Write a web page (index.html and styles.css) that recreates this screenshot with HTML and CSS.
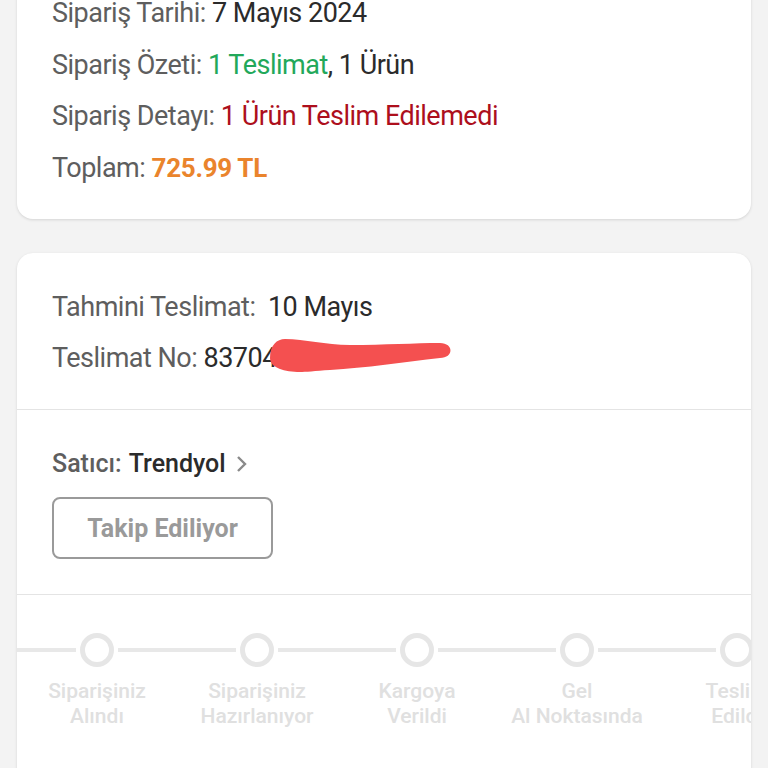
FILE: index.html
```html
<!DOCTYPE html>
<html lang="tr">
<head>
<meta charset="utf-8">
<link rel="stylesheet" href="styles.css">
</head>
<body>
<div class="page">
  <div class="card card-summary">
    <div class="row"><span class="lbl">Sipariş Tarihi:</span> <span class="val">7 Mayıs 2024</span></div>
    <div class="row"><span class="lbl">Sipariş Özeti:</span> <span class="green">1 Teslimat</span><span class="val">, 1 Ürün</span></div>
    <div class="row"><span class="lbl">Sipariş Detayı:</span> <span class="red">1 Ürün Teslim Edilemedi</span></div>
    <div class="row"><span class="lbl">Toplam:</span> <span class="orange">725.99 TL</span></div>
  </div>

  <div class="card card-delivery">
    <div class="section sec-info">
      <div class="row"><span class="lbl">Tahmini Teslimat:</span>&nbsp; <span class="val">10 Mayıs</span></div>
      <div class="row"><span class="lbl">Teslimat No:</span> <span class="val">83704</span></div>
      <svg class="scribble" width="210" height="45" viewBox="0 0 210 45">
        <path d="M15 23 C15 10 22 4 30 4 C50 4 70 10 95 10 C130 10 160 8 185 8 C199 8 199 23 185 23 C150 27 110 33 75 35 C60 36 50 37 45 37 C30 37 15 33 15 23 Z" fill="#f45050"/>
      </svg>
    </div>
    <div class="section sec-seller">
      <div class="seller"><span class="lbl">Satıcı:</span> <span class="val">Trendyol</span>
        <svg class="chev" width="12" height="18" viewBox="0 0 12 18"><polyline points="2,2 9,9 2,16" fill="none" stroke="#8a8a8a" stroke-width="2.4"/></svg>
      </div>
      <button class="follow">Takip Ediliyor</button>
    </div>
    <div class="section sec-steps">
      <div class="steps">
        <div class="step"><div class="track"><span class="ln"></span><span class="dot"></span><span class="ln"></span></div><div class="slbl">Siparişiniz<br>Alındı</div></div>
        <div class="step"><div class="track"><span class="ln"></span><span class="dot"></span><span class="ln"></span></div><div class="slbl">Siparişiniz<br>Hazırlanıyor</div></div>
        <div class="step"><div class="track"><span class="ln"></span><span class="dot"></span><span class="ln"></span></div><div class="slbl">Kargoya<br>Verildi</div></div>
        <div class="step"><div class="track"><span class="ln"></span><span class="dot"></span><span class="ln"></span></div><div class="slbl">Gel<br>Al Noktasında</div></div>
        <div class="step"><div class="track"><span class="ln"></span><span class="dot"></span><span class="ln"></span></div><div class="slbl">Teslim<br>Edildi</div></div>
      </div>
    </div>
  </div>
</div>
</body>
</html>
```

FILE: styles.css
```css
html, body {
  margin: 0;
  padding: 0;
  background: #f3f3f3;
  overflow: hidden;
  height: 768px;
}
body {
  font-family: Roboto, "Noto Sans", sans-serif;
  font-size: 27px;
  font-weight: 400;
  letter-spacing: -0.5px;
  color: #333;
}
.page {
  padding: 0 17px;
}
.card {
  background: #fff;
  border-radius: 16px;
  box-shadow: 0 1px 3px rgba(0,0,0,0.13);
  overflow: hidden;
}
.card-summary {
  margin-top: -40px;
  padding: 28px 35px 25px;
}
.row {
  line-height: 51.5px;
  white-space: nowrap;
}
.lbl { color: #5e5e5e; }
.val { color: #2b2b2b; }
.green { color: #22a85a; }
.red { color: #ad0f1c; }
.orange { color: #ea842c; font-weight: 700; letter-spacing: -0.3px; font-size: 26px; }
.card-delivery {
  margin-top: 34px;
  height: 600px;
}
.section {
  border-bottom: 1px solid #e4e4e4;
  padding-left: 35px;
}
.sec-info {
  position: relative;
  padding-top: 29px;
  padding-bottom: 25px;
}
.sec-info .row { line-height: 51px; }
.scribble {
  position: absolute;
  left: 238px;
  top: 82px;
}
.sec-seller {
  padding-top: 39px;
  padding-bottom: 35px;
}
.seller {
  line-height: 30px;
  display: flex;
  align-items: center;
  gap: 7px;
}
.seller .val { font-weight: 500; font-size: 25px; letter-spacing: 0; }
.seller .lbl { font-weight: 500; font-size: 25px; letter-spacing: 0; }
.chev { margin-left: 3px; }
.follow {
  display: block;
  margin-top: 18px;
  width: 221px;
  height: 62px;
  box-sizing: border-box;
  border: 2px solid #9a9a9a;
  border-radius: 8px;
  background: #fff;
  color: #9a9a9a;
  font-family: Roboto, sans-serif;
  font-size: 25px;
  font-weight: 700;
  padding: 0;
}
.sec-steps {
  border-bottom: none;
  padding: 38px 0 0;
}
.steps {
  display: flex;
}
.step {
  flex: 0 0 160px;
  display: flex;
  flex-direction: column;
  align-items: center;
}
.track {
  display: flex;
  align-items: center;
  width: 100%;
  gap: 4px;
}
.ln {
  flex: 1;
  height: 4px;
  background: #e8e8e8;
}
.dot {
  width: 24px;
  height: 24px;
  border: 5px solid #e6e6e6;
  border-radius: 50%;
}
.slbl {
  margin-top: 12px;
  text-align: center;
  font-size: 21px;
  font-weight: 500;
  letter-spacing: 0;
  line-height: 25px;
  color: #e0e0e0;
  white-space: nowrap;
}
```
